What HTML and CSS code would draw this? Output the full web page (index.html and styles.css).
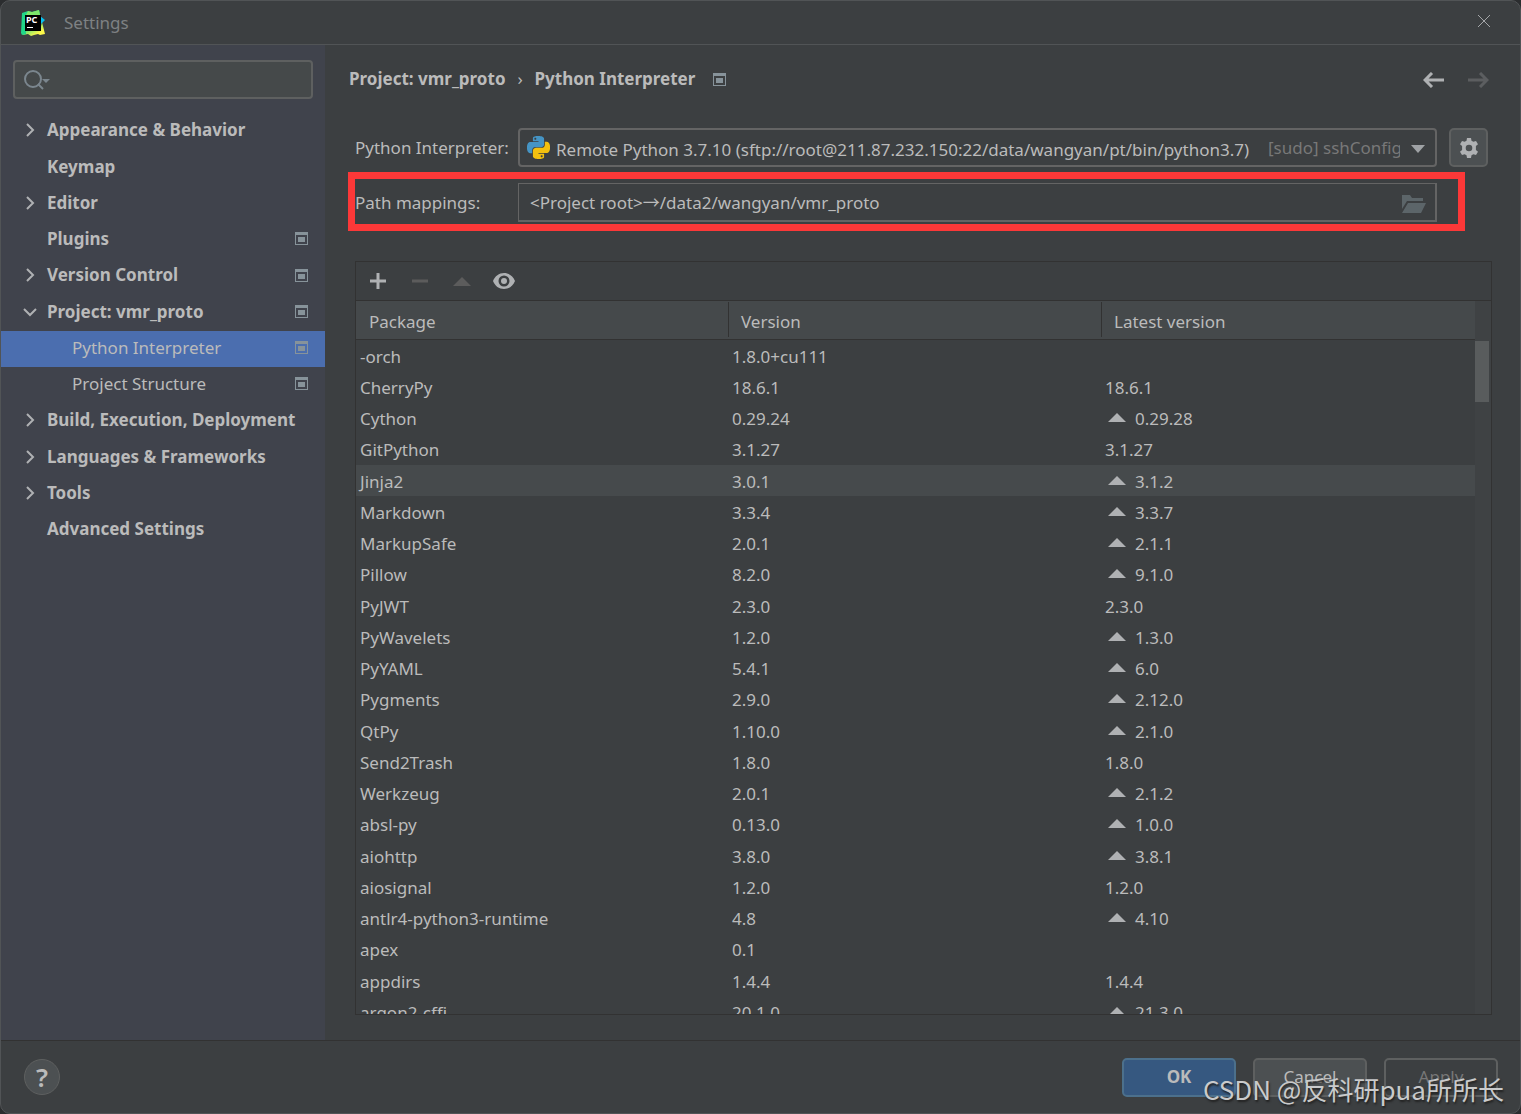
FILE: index.html
```html
<!DOCTYPE html>
<html lang="en">
<head>
<meta charset="utf-8">
<title>Settings</title>
<link rel="stylesheet" href="styles.css">
</head>
<body>
<svg class="defs" width="0" height="0" aria-hidden="true">
  <symbol id="scope" viewBox="0 0 13 13"><path fill="#87939a" fill-rule="evenodd" d="M0 0h13v13H0zM1 3v9h11V3zM3 5h7v5H3z"/><path fill="#87939a" d="M3 5h7v4H3z"/></symbol>
  <symbol id="right" viewBox="0 0 14 14"><path fill="none" stroke="#afb1b3" stroke-width="2" d="M4 1l6 6-6 6"/></symbol>
  <symbol id="down" viewBox="0 0 14 14"><path fill="none" stroke="#afb1b3" stroke-width="2" d="M1 4l6 6 6-6"/></symbol>
  <symbol id="up" viewBox="0 0 18 9"><path fill="currentColor" d="M0 9l9-9 9 9z"/></symbol>
  <symbol id="snake" viewBox="0 0 24 24"><path d="M14.250.18l.9.2.73.26.59.3.45.32.34.34.25.34.16.33.1.3.04.26.02.2-.01.13V8.500l-.05.63-.13.55-.21.46-.26.38-.3.31-.33.25-.35.19-.35.14-.33.1-.3.07-.26.04-.21.02H8.770l-.69.05-.59.14-.5.22-.41.27-.33.32-.27.35-.2.36-.15.37-.1.35-.07.32-.04.27-.02.21v3.060H3.170l-.21-.03-.28-.07-.32-.12-.35-.18-.36-.26-.36-.36-.35-.46-.32-.59-.28-.73-.21-.88-.14-1.050-.05-1.230.06-1.220.16-1.040.24-.87.32-.71.36-.57.4-.44.42-.33.42-.24.4-.16.36-.1.32-.05.24-.01h.16l.06.01h8.160v-.83H6.180l-.01-2.750-.02-.37.05-.34.11-.31.17-.28.25-.26.31-.23.38-.2.44-.18.51-.15.58-.12.64-.1.71-.06.77-.04.84-.02 1.270.05zm-6.300 1.980l-.23.33-.08.41.08.41.23.34.33.22.41.09.41-.09.33-.22.23-.34.08-.41-.08-.41-.23-.33-.33-.22-.41-.09-.41.09z"/></symbol>
</svg>
<div class="window">
  <header class="titlebar">
    <svg class="logo" viewBox="0 0 26 26" aria-hidden="true">
      <defs><linearGradient id="g1" x1="0" y1="0" x2="1" y2="1"><stop offset=".2" stop-color="#21d789"/><stop offset=".75" stop-color="#fcf84a"/></linearGradient></defs>
      <path fill="url(#g1)" d="M4 20h16l2-8 3 12-5 1-2-1-4 1-3 1-3-2-5 1z"/>
      <path fill="#21d789" d="M2 3l6-2 4 1 7-2 1 4 1 3L6 6v18l-4 1-1-2z"/>
      <path fill="#7ee76a" d="M8 1l4 1 7-2 1 5H6z"/>
      <path fill="#07c3f2" d="M20 6l5 4-4 4-1-1z"/>
      <path d="M5 5h16v16H5z"/>
      <text class="logo-text" x="6" y="13">PC</text>
      <path fill="#fff" d="M7 17h6v1H7z"/>
    </svg>
    <h1 class="title">Settings</h1>
    <button class="plain close" aria-label="Close"><svg width="14" height="14" viewBox="0 0 14 14"><path stroke="#a5a7a9" d="M1 1l12 12M13 1L1 13"/></svg></button>
  </header>

  <div class="body">
    <aside class="sidebar">
      <div class="search">
        <svg class="search-icon" viewBox="0 0 26 20" aria-hidden="true"><circle cx="9" cy="9" r="8" fill="none" stroke="#7b868e" stroke-width="2"/><path stroke="#7b868e" stroke-width="2" d="M14 14l5 5"/><path fill="#7b868e" d="M18 9h8l-4 4z"/></svg>
        <input class="search-input" type="text" aria-label="Search settings">
      </div>
      <nav aria-label="Settings sections">
        <ul class="tree">
          <li><a href="#"><svg class="chevron"><use href="#right"/></svg><span>Appearance &amp; Behavior</span></a></li>
          <li><a href="#"><span>Keymap</span></a></li>
          <li><a href="#"><svg class="chevron"><use href="#right"/></svg><span>Editor</span></a></li>
          <li><a href="#"><span>Plugins</span><svg class="scope"><use href="#scope"/></svg></a></li>
          <li><a href="#"><svg class="chevron"><use href="#right"/></svg><span>Version Control</span><svg class="scope"><use href="#scope"/></svg></a></li>
          <li><a href="#"><svg class="chevron"><use href="#down"/></svg><span>Project: vmr_proto</span><svg class="scope"><use href="#scope"/></svg></a></li>
          <li class="child selected"><a href="#" aria-current="page"><span>Python Interpreter</span><svg class="scope"><use href="#scope"/></svg></a></li>
          <li class="child"><a href="#"><span>Project Structure</span><svg class="scope"><use href="#scope"/></svg></a></li>
          <li><a href="#"><svg class="chevron"><use href="#right"/></svg><span>Build, Execution, Deployment</span></a></li>
          <li><a href="#"><svg class="chevron"><use href="#right"/></svg><span>Languages &amp; Frameworks</span></a></li>
          <li><a href="#"><svg class="chevron"><use href="#right"/></svg><span>Tools</span></a></li>
          <li><a href="#"><span>Advanced Settings</span></a></li>
        </ul>
      </nav>
    </aside>

    <main class="main">
      <div class="crumbs">
        <a href="#">Project: vmr_proto</a><span class="sep">›</span><span>Python Interpreter</span>
        <svg class="scope"><use href="#scope"/></svg>
        <div class="history">
          <button class="plain" aria-label="Back"><svg width="22" height="16" viewBox="0 0 22 16"><path fill="none" stroke="#afb1b3" stroke-width="3" d="M21 8H3M9 1L2 8l7 7"/></svg></button>
          <button class="plain" aria-label="Forward" disabled><svg width="22" height="16" viewBox="0 0 22 16"><path fill="none" stroke="#5c5e60" stroke-width="3" d="M1 8h18M13 1l7 7-7 7"/></svg></button>
        </div>
      </div>

      <div class="field">
        <label for="interp">Python Interpreter:</label>
        <div class="combo">
          <svg class="python" viewBox="0 0 24 24" aria-hidden="true"><use href="#snake" width="24" height="24" fill="#4594c4"/><use href="#snake" width="24" height="24" fill="#f2c00f" transform="rotate(180 12 12)"/></svg>
          <select id="interp" class="box"><option>Remote Python 3.7.10 (sftp://root@211.87.232.150:22/data/wangyan/pt/bin/python3.7)</option></select>
          <span class="combo-note">[sudo] sshConfig</span>
          <svg class="caret" viewBox="0 0 14 8" aria-hidden="true"><path fill="#9fa2a5" d="M0 0h14L7 8z"/></svg>
        </div>
        <button class="gear" aria-label="Interpreter options"><svg width="20" height="20" viewBox="0 0 20 20"><path fill="#afb1b3" fill-rule="evenodd" d="M8 0h4l.5 2.700 1.900 1.100L17 2.900l2 3.400-2.100 1.800v3.800l2.100 1.800-2 3.400-2.600-.9-1.900 1.100L12 20H8l-.5-2.700-1.900-1.100-2.600.9-2-3.400 2.100-1.800V8.100L1 6.300l2-3.400 2.600.9 1.900-1.100zM10 6.700a3.300 3.300 0 1 0 0 6.600 3.300 3.300 0 0 0 0-6.600z"/></svg></button>
      </div>
      <div class="field marked">
        <label for="paths">Path mappings:</label>
        <div class="combo">
          <input id="paths" class="box" type="text" readonly value="&lt;Project root&gt;→/data2/wangyan/vmr_proto">
          <svg class="folder" viewBox="0 0 24 18" aria-hidden="true"><path fill="#5c6569" d="M0 0h8l2 3h11v3H5L0 14zM6 8h18l-5 10H0z"/></svg>
        </div>
      </div>

      <section class="packages" aria-label="Packages">
        <div class="toolbar">
          <button class="plain" aria-label="Install"><svg width="22" height="18" viewBox="0 0 22 18"><path stroke="#afb1b3" stroke-width="3" d="M3 9h16M11 1v16"/></svg></button>
          <button class="plain" aria-label="Uninstall" disabled><svg width="22" height="18" viewBox="0 0 22 18"><path stroke="#5c5c5c" stroke-width="3" d="M3 9h16"/></svg></button>
          <button class="plain off" aria-label="Upgrade" disabled><svg width="22" height="9"><use href="#up"/></svg></button>
          <button class="plain" aria-label="Show early releases"><svg width="22" height="16" viewBox="0 0 22 16"><path fill="#afb1b3" fill-rule="evenodd" d="M11 0c5 0 9 3 11 8-2 5-6 8-11 8S2 13 0 8c2-5 6-8 11-8zm0 2.500a5.500 5.500 0 1 0 0 11 5.500 5.500 0 0 0 0-11z"/><circle cx="11" cy="8" r="3" fill="#afb1b3"/></svg></button>
        </div>
        <div class="listing">
          <div class="scroller">
            <table>
              <thead><tr><th>Package</th><th>Version</th><th>Latest version</th></tr></thead>
              <tbody>
                <tr><td>-orch</td><td>1.8.0+cu111</td><td></td></tr>
                <tr><td>CherryPy</td><td>18.6.1</td><td>18.6.1</td></tr>
                <tr><td>Cython</td><td>0.29.24</td><td><svg class="up"><use href="#up"/></svg>0.29.28</td></tr>
                <tr><td>GitPython</td><td>3.1.27</td><td>3.1.27</td></tr>
                <tr class="hover"><td>Jinja2</td><td>3.0.1</td><td><svg class="up"><use href="#up"/></svg>3.1.2</td></tr>
                <tr><td>Markdown</td><td>3.3.4</td><td><svg class="up"><use href="#up"/></svg>3.3.7</td></tr>
                <tr><td>MarkupSafe</td><td>2.0.1</td><td><svg class="up"><use href="#up"/></svg>2.1.1</td></tr>
                <tr><td>Pillow</td><td>8.2.0</td><td><svg class="up"><use href="#up"/></svg>9.1.0</td></tr>
                <tr><td>PyJWT</td><td>2.3.0</td><td>2.3.0</td></tr>
                <tr><td>PyWavelets</td><td>1.2.0</td><td><svg class="up"><use href="#up"/></svg>1.3.0</td></tr>
                <tr><td>PyYAML</td><td>5.4.1</td><td><svg class="up"><use href="#up"/></svg>6.0</td></tr>
                <tr><td>Pygments</td><td>2.9.0</td><td><svg class="up"><use href="#up"/></svg>2.12.0</td></tr>
                <tr><td>QtPy</td><td>1.10.0</td><td><svg class="up"><use href="#up"/></svg>2.1.0</td></tr>
                <tr><td>Send2Trash</td><td>1.8.0</td><td>1.8.0</td></tr>
                <tr><td>Werkzeug</td><td>2.0.1</td><td><svg class="up"><use href="#up"/></svg>2.1.2</td></tr>
                <tr><td>absl-py</td><td>0.13.0</td><td><svg class="up"><use href="#up"/></svg>1.0.0</td></tr>
                <tr><td>aiohttp</td><td>3.8.0</td><td><svg class="up"><use href="#up"/></svg>3.8.1</td></tr>
                <tr><td>aiosignal</td><td>1.2.0</td><td>1.2.0</td></tr>
                <tr><td>antlr4-python3-runtime</td><td>4.8</td><td><svg class="up"><use href="#up"/></svg>4.10</td></tr>
                <tr><td>apex</td><td>0.1</td><td></td></tr>
                <tr><td>appdirs</td><td>1.4.4</td><td>1.4.4</td></tr>
                <tr><td>argon2-cffi</td><td>20.1.0</td><td><svg class="up"><use href="#up"/></svg>21.3.0</td></tr>
              </tbody>
            </table>
          </div>
          <div class="track"><div class="thumb"></div></div>
        </div>
      </section>
    </main>
  </div>

  <footer class="footer">
    <button class="help" aria-label="Help">?</button>
    <button class="btn primary">OK</button>
    <button class="btn">Cancel</button>
    <button class="btn disabled" disabled>Apply</button>
  </footer>
  <div class="watermark">CSDN @反科研pua所所长</div>
</div>
</body>
</html>
```
FILE: styles.css
```css
* { box-sizing: border-box; }

body {
  margin: 0;
  background: #2b2d2f;
  color: #bbbbbb;
  font: 17px/24px "Noto Sans", "Open Sans", "Noto Sans CJK SC", sans-serif;
}

a { color: inherit; text-decoration: none; }
button, input, select { font: inherit; color: inherit; margin: 0; }
svg { display: block; flex: none; }
.defs { position: absolute; }

.plain {
  display: flex;
  padding: 0;
  border: 0;
  background: none;
}

.window {
  position: relative;
  display: flex;
  flex-direction: column;
  height: 100vh;
  border: 1px solid #515456;
  border-radius: 10px;
  background: #3c3f41;
  overflow: hidden;
}

/* Title bar */
.titlebar {
  display: flex;
  align-items: center;
  height: 44px;
  padding: 0 29px 0 19px;
  border-bottom: 1px solid #515456;
}
.logo { width: 26px; height: 26px; }
.logo-text { font: bold 9px "Noto Sans", sans-serif; fill: #fff; }
.title { margin: 0 0 0 18px; font-size: 17px; font-weight: 400; color: #7e8183; }
.close { margin: 0 0 3px auto; }

.body { display: flex; flex: 1; min-height: 0; }

/* Sidebar */
.sidebar { width: 324px; padding-top: 15px; background: #40434c; }
.search {
  display: flex;
  align-items: center;
  height: 39px;
  margin: 0 12px 14px;
  padding-left: 9px;
  border: 2px solid #5e6060;
  border-radius: 4px;
  background: #45494a;
}
.search-icon { width: 26px; height: 20px; }
.search-input { flex: 1; min-width: 0; border: 0; background: none; outline: 0; }

.tree { margin: 0; padding: 0; list-style: none; font-weight: 700; }
.tree li { height: 36px; }
.tree li:nth-child(4n+1) { height: 37px; }
.tree a {
  display: flex;
  align-items: center;
  height: 100%;
  padding: 0 17px 3px 46px;
}
.tree .chevron { width: 14px; height: 14px; margin: 0 10px 0 -24px; }
.tree .scope { margin-left: auto; }
.tree .child { font-weight: 400; }
.tree .child a { padding-left: 71px; }
.tree .selected { background: #4b6eaf; }
.scope { width: 13px; height: 13px; }

/* Main pane */
.main {
  display: flex;
  flex: 1;
  flex-direction: column;
  min-width: 0;
  padding: 0 28px 25px 30px;
}
.crumbs {
  display: flex;
  align-items: center;
  height: 68px;
  margin: 0 0 15px -6px;
  font-weight: 700;
}
.sep { width: 29px; text-align: center; font-weight: 400; }
.crumbs .scope { margin-left: 18px; }
.history { display: flex; gap: 22px; margin: 2px 3px 0 auto; }

.field {
  position: relative;
  display: flex;
  margin: 0 4px 16px 0;
  line-height: 39px;
}
.field label { width: 163px; }
.combo { position: relative; flex: 1; min-width: 0; height: 39px; }
.box {
  display: block;
  width: 100%;
  height: 100%;
  padding: 0 36px 2px 11px;
  border: 2px solid #646464;
  background: #3c3f41;
  outline: 0;
}
select.box { appearance: none; padding: 0 36px 4px; border-radius: 4px; }
.python { position: absolute; left: 9px; top: 8px; width: 23px; height: 23px; }
.combo-note {
  position: absolute;
  right: 37px;
  top: 0;
  width: 132px;
  overflow: hidden;
  white-space: nowrap;
  color: #787878;
}
.caret { position: absolute; right: 12px; top: 17px; width: 14px; height: 8px; }
.folder { position: absolute; right: 11px; top: 12px; width: 24px; height: 18px; }
.gear {
  display: flex;
  align-items: center;
  justify-content: center;
  width: 39px;
  height: 39px;
  margin-left: 12px;
  padding: 0;
  border: 2px solid #5e6060;
  border-radius: 5px;
  background: #4c5052;
}
.marked { margin-bottom: 39px; padding-right: 51px; }
.box[type="text"] { border-width: 1px 2px 2px 1px; }
.marked::after {
  content: "";
  position: absolute;
  inset: -11px 23px -9px -7px;
  border: 7px solid #fc3838;
  pointer-events: none;
}

/* Package list */
.packages {
  display: flex;
  flex: 1;
  flex-direction: column;
  min-height: 0;
  border: 1px solid #323232;
}
.toolbar {
  display: flex;
  align-items: center;
  gap: 20px;
  height: 39px;
  padding-left: 11px;
  border-bottom: 1px solid #323232;
}
.toolbar .off { color: #5c5c5c; }
.listing { display: flex; flex: 1; min-height: 0; }
.scroller { flex: 1; overflow: hidden; }
.track { width: 16px; padding: 40px 2px 0 0; background: #3f4244; }
.thumb { height: 61px; background: #595c5d; }

table { width: 100%; border-spacing: 0; table-layout: fixed; }
th {
  height: 39px;
  padding: 3px 12px 0;
  border-bottom: 1px solid #323232;
  background: linear-gradient(#323232, #323232) right 1px / 1px 35px no-repeat #45494b;
  font-weight: 400;
  text-align: left;
}
th:first-child { padding-left: 13px; }
th:last-child { background: #45494b; }
td { height: 31px; padding: 2px 4px 0 3px; line-height: 24px; }
td:first-child { padding-left: 4px; }
tr:nth-child(4n) td { height: 32px; }
.hover { background: #464a4c; }
.up {
  display: inline-block;
  width: 18px;
  height: 9px;
  margin: 0 9px 3px 3px;
  color: #afb1b3;
}

/* Footer */
.footer {
  display: flex;
  align-items: center;
  gap: 17px;
  height: 73px;
  padding: 0 22px 0 23px;
  border-top: 1px solid #323232;
}
.help {
  width: 36px;
  height: 36px;
  margin-right: auto;
  padding: 0;
  border: 1px solid #5e6060;
  border-radius: 50%;
  background: #4c5052;
  font-size: 26px;
  font-weight: 600;
}
.btn {
  width: 114px;
  height: 39px;
  padding: 0;
  border: 2px solid #5e6060;
  border-radius: 5px;
  background: #4c5052;
}
.primary { border-color: #4c708c; background: #365880; font-weight: 700; }
.disabled { background: none; color: #777777; }

.watermark {
  position: absolute;
  right: 16px;
  bottom: 4px;
  color: #c9cacb;
  font: 26px/40px "Noto Sans CJK SC", sans-serif;
  text-shadow: 1px 2px 2px #222222;
  white-space: nowrap;
  pointer-events: none;
}
```
